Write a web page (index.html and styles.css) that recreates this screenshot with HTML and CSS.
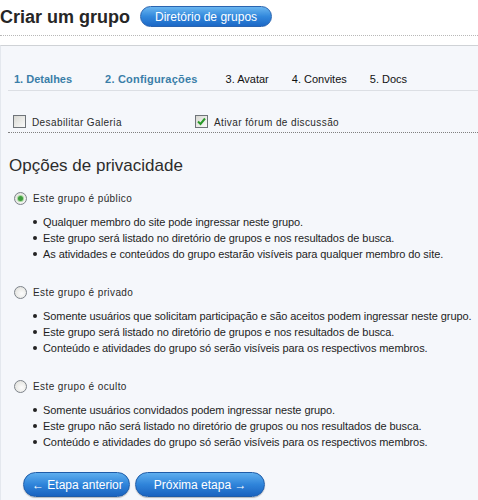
FILE: index.html
```html
<!DOCTYPE html>
<html lang="pt-BR">
<head>
<meta charset="utf-8">
<title>Criar um grupo</title>
<link rel="stylesheet" href="styles.css">
</head>
<body>
<div class="header">
  <h1 class="title">Criar um grupo</h1>
  <a class="pill" href="#">Diretório de grupos</a>
</div>
<div class="panel">
  <ul class="tabs">
    <li class="done t1">1. Detalhes</li>
    <li class="done t2">2. Configurações</li>
    <li>3. Avatar</li>
    <li>4. Convites</li>
    <li>5. Docs</li>
  </ul>
  <div class="checks">
    <label class="check first"><span class="box"></span><span class="small">Desabilitar Galeria</span></label>
    <label class="check"><span class="box checked"><svg viewBox="0 0 13 13" width="13" height="13"><polyline points="3,6.5 5.5,9 10,3.5" fill="none" stroke="#2a9a2a" stroke-width="2"/></svg></span><span class="small">Ativar fórum de discussão</span></label>
  </div>
  <h2 class="section">Opções de privacidade</h2>

  <div class="option">
    <div class="radio-row"><span class="radio on"></span><span class="small">Este grupo é público</span></div>
    <ul class="bullets">
      <li>Qualquer membro do site pode ingressar neste grupo.</li>
      <li>Este grupo será listado no diretório de grupos e nos resultados de busca.</li>
      <li>As atividades e conteúdos do grupo estarão visíveis para qualquer membro do site.</li>
    </ul>
  </div>

  <div class="option">
    <div class="radio-row"><span class="radio"></span><span class="small">Este grupo é privado</span></div>
    <ul class="bullets">
      <li>Somente usuários que solicitam participação e são aceitos podem ingressar neste grupo.</li>
      <li>Este grupo será listado no diretório de grupos e nos resultados de busca.</li>
      <li>Conteúdo e atividades do grupo só serão visíveis para os respectivos membros.</li>
    </ul>
  </div>

  <div class="option">
    <div class="radio-row"><span class="radio"></span><span class="small">Este grupo é oculto</span></div>
    <ul class="bullets">
      <li>Somente usuários convidados podem ingressar neste grupo.</li>
      <li>Este grupo não será listado no diretório de grupos ou nos resultados de busca.</li>
      <li>Conteúdo e atividades do grupo só serão visíveis para os respectivos membros.</li>
    </ul>
  </div>

  <div class="actions">
    <a class="btn prev" href="#">← Etapa anterior</a>
    <a class="btn next" href="#">Próxima etapa →</a>
  </div>
</div>
</body>
</html>
```

FILE: styles.css
```css
* { box-sizing: border-box; }

body {
  margin: 0;
  width: 478px;
  font-family: "Liberation Sans", Arial, sans-serif;
  color: #222;
  background: #fff;
}

.header {
  display: flex;
  align-items: center;
  height: 36px;
  padding-bottom: 2px;
  border-bottom: 1px dotted #b8b8b8;
}

.title {
  margin: 0 10px 0 0;
  font-size: 18px;
  line-height: 22px;
  font-weight: bold;
  color: #262626;
}

.pill {
  display: inline-flex;
  align-items: center;
  height: 21px;
  padding: 0 14px;
  border-radius: 11px;
  border: 1px solid #2a64b0;
  background: linear-gradient(#6ab6f0, #3288dc 50%, #1c68c6);
  color: #fff;
  font-size: 12px;
  text-decoration: none;
}

.panel {
  margin-top: 9px;
  border-top: 1px solid #cfd2d6;
  border-left: 1px solid #e4e8ee;
  background: #f5f7fb;
  padding: 0 0 20px 7px;
}

.tabs {
  list-style: none;
  margin: 0;
  padding: 26px 0 4px 6px;
  display: flex;
  gap: 23px;
  font-size: 11px;
  line-height: 14px;
  border-bottom: 1px solid #dcdfe4;
}

.tabs li { color: #111; }
.tabs .done { color: #3a7ea8; font-weight: bold; }
.tabs .t1 { padding-right: 10px; }
.tabs .t2 { padding-right: 5px; letter-spacing: 0.2px; }

.checks {
  display: flex;
  align-items: center;
  padding: 24px 0 1px 5px;
  line-height: 16px;
  border-bottom: 1px dotted #808080;
}

.check {
  display: flex;
  align-items: center;
  gap: 6px;
}

.check.first { width: 182px; }

.box {
  width: 13px;
  height: 13px;
  margin-bottom: 3px;
  border: 1px solid #6f7479;
  background: linear-gradient(135deg, #d8d8d2, #fafafa);
  display: flex;
  align-items: center;
  justify-content: center;
}

.box svg { display: block; flex: none; }

.small {
  font-size: 10px;
  letter-spacing: 0.4px;
  color: #2a2a2a;
}

.section {
  margin: 23px 0 0 1px;
  font-size: 17px;
  line-height: 20px;
  font-weight: normal;
  color: #2c2c2c;
}

.option { margin-top: 23px; }
.section + .option { margin-top: 15px; }

.radio-row {
  display: flex;
  align-items: center;
  gap: 6px;
  height: 14px;
  padding-left: 6px;
}

.radio {
  width: 13px;
  height: 13px;
  border-radius: 50%;
  border: 1px solid #7d838a;
  background: radial-gradient(circle at 60% 60%, #fdfdfd, #dcdcd6);
  display: flex;
  align-items: center;
  justify-content: center;
}

.radio.on::after {
  content: "";
  width: 5px;
  height: 5px;
  border-radius: 50%;
  background: #3f9c3f;
  box-shadow: 0 0 0 1px #a9d9a0;
}

.bullets {
  list-style: none;
  margin: 9px 0 0;
  padding: 0 0 0 25px;
  font-size: 11px;
  line-height: 16px;
  letter-spacing: -0.08px;
  color: #1e1e1e;
}

.bullets li {
  display: flex;
  align-items: center;
  gap: 6px;
  white-space: nowrap;
}

.bullets li::before {
  content: "";
  flex: none;
  width: 4px;
  height: 4px;
  border-radius: 50%;
  background: #222;
}

.actions {
  display: flex;
  gap: 5px;
  margin-top: 22px;
  padding-left: 15px;
}

.btn {
  display: inline-flex;
  align-items: center;
  height: 25px;
  border-radius: 13px;
  border: 1px solid #1f5ca8;
  background: linear-gradient(#5eaeee, #2f84da 50%, #1a63c0);
  color: #fff;
  font-size: 12px;
  text-decoration: none;
  box-shadow: 0 1px 1px rgba(0,0,0,0.25);
}

.btn.prev { padding: 0 6px 0 8px; }
.btn.next { padding: 0 18px; }
```
